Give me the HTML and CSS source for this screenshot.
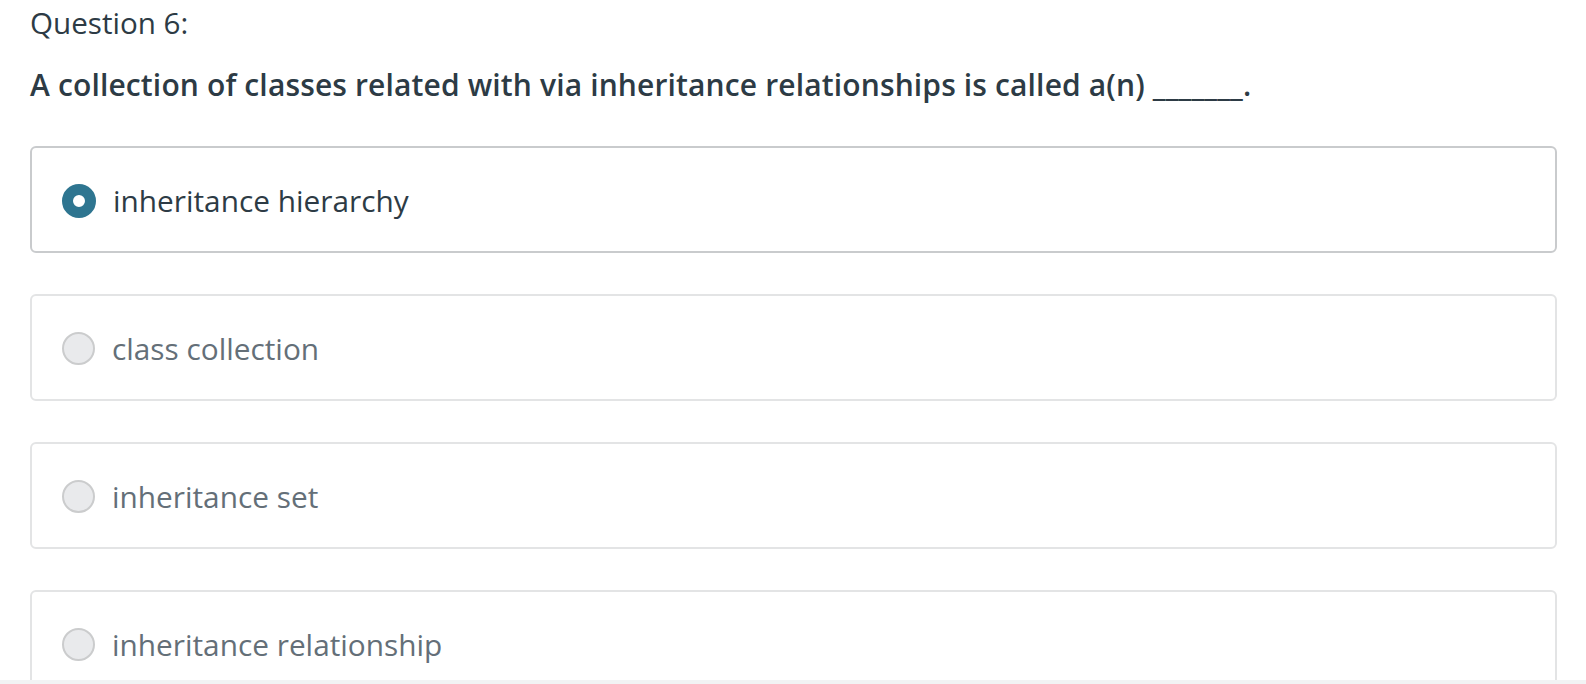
FILE: index.html
```html
<!DOCTYPE html>
<html lang="en">
<head>
<meta charset="utf-8">
<title>Question 6</title>
<link rel="stylesheet" href="styles.css">
</head>
<body>
<main class="quiz">
  <h2 class="q-label">Question 6:</h2>
  <p class="q-text">A collection of classes related with via inheritance relationships is called a(n) _______.</p>
  <div class="answers">
    <label class="answer selected">
      <span class="radio"></span>
      <span class="answer-text">inheritance hierarchy</span>
    </label>
    <label class="answer">
      <span class="radio"></span>
      <span class="answer-text">class collection</span>
    </label>
    <label class="answer">
      <span class="radio"></span>
      <span class="answer-text">inheritance set</span>
    </label>
    <label class="answer">
      <span class="radio"></span>
      <span class="answer-text">inheritance relationship</span>
    </label>
  </div>
</main>
<div class="footer-bar"></div>
</body>
</html>
```

FILE: styles.css
```css
* { box-sizing: border-box; }

html, body {
  margin: 0;
  padding: 0;
  background: #ffffff;
  overflow: hidden;
}

body {
  font-family: "Open Sans", "Liberation Sans", sans-serif;
  color: #2d3b45;
}

.quiz {
  padding: 3px 29px 0 30px;
}

.q-label {
  margin: 0;
  font-size: 29.6px;
  line-height: 40px;
  font-weight: 400;
}

.q-text {
  margin: 22px 0 0 0;
  font-size: 30px;
  line-height: 40px;
  font-weight: 600;
  letter-spacing: 0.14px;
}

.answers {
  margin-top: 41px;
  display: flex;
  flex-direction: column;
  gap: 41px;
}

.answer {
  display: flex;
  align-items: center;
  gap: 17px;
  height: 107px;
  padding: 2px 30px 0;
  border: 2px solid #e3e4e5;
  border-radius: 6px;
  background: #ffffff;
}

.answer.selected {
  border-color: #c9cbcd;
}

.radio {
  flex: none;
  width: 33px;
  height: 33px;
  border-radius: 50%;
  background: #e9eaec;
  border: 2px solid #cbcccd;
}

.answer.selected .radio {
  width: 34px;
  height: 34px;
  background: #ffffff;
  border: 11px solid #2e7590;
}

.answer-text {
  font-size: 29.8px;
  line-height: 40px;
  color: #646f78;
}

.answer.selected .answer-text {
  color: #2d3b45;
}

.footer-bar {
  position: fixed;
  left: 0;
  right: 0;
  bottom: 0;
  height: 4px;
  background: #f2f3f4;
}
```
